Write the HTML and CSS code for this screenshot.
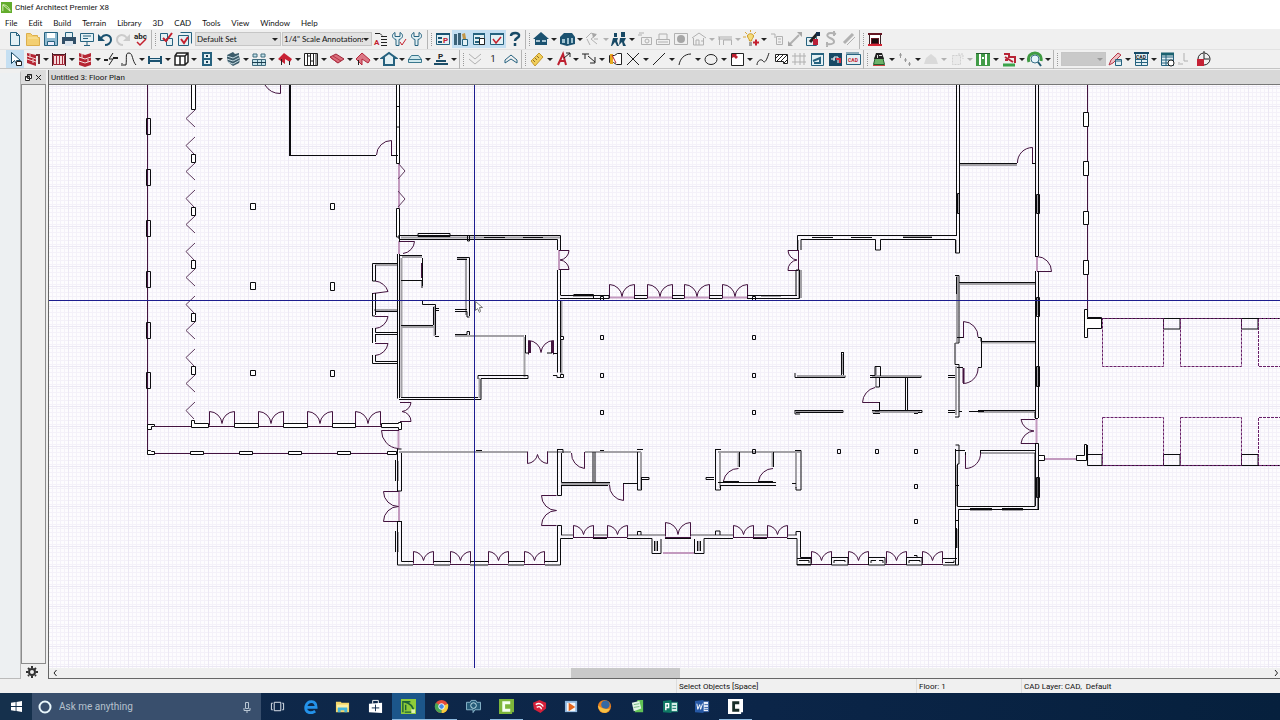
FILE: index.html
```html
<!DOCTYPE html>
<html lang="en">
<head>
<meta charset="utf-8">
<title>Chief Architect Premier X8</title>
<link rel="stylesheet" href="styles.css">
</head>
<body>
<header class="titlebar">
<svg class="logo" viewBox="0 0 12 12"><path fill="#62ac2c" d="M0 0h12v12H0z"/><path fill="none" stroke="#e4f5c8" d="M2 10V3c4 0 7 3 8 7M2 3l8 7"/></svg>
<span>Chief Architect Premier X8</span>
</header>
<nav class="menu">
<button>File</button><button>Edit</button><button>Build</button><button>Terrain</button><button>Library</button><button>3D</button><button>CAD</button><button>Tools</button><button>View</button><button>Window</button><button>Help</button>
</nav>

<div class="toolbar" role="toolbar" aria-label="Standard">
<button class="t" aria-label="New"><svg viewBox="0 0 18 18"><path class="n" fill="#fff" d="M4.500 2.500h6l3 3v10h-9zM10.500 2.500v3h3"/></svg></button>
<button class="t" aria-label="Open"><svg viewBox="0 0 18 18"><path fill="#f3cf72" stroke="#dcae4c" d="M2.500 15.500v-12h4l2 2h5v2h2v8z"/><path stroke="#fbe7a8" d="M4 8h10"/></svg></button>
<button class="t" aria-label="Save"><svg viewBox="0 0 18 18"><path fill="#8fb9d0" stroke="#26627f" d="M2.500 2.500h13v13h-13z"/><path fill="#fff" d="M5 3h8v5H5z"/><path fill="#eef" stroke="#26627f" d="M5.500 11.500h7v4h-7z"/></svg></button>
<button class="t" aria-label="Print"><svg viewBox="0 0 18 18"><path class="n" fill="#fff" d="M5.500 7V2.500h7V7"/><path fill="#314f68" d="M2 7h14v7H2z"/><path fill="#dce5ee" d="M5 11h8v5H5z"/></svg></button>
<button class="t" aria-label="Send to layout"><svg viewBox="0 0 18 18"><path class="n" fill="#cfe6e9" d="M2.500 3.500h13v8h-13zM5 6h8M5 8.500h5M9 12v3M6 15.500h6"/></svg></button>
<button class="t" aria-label="Undo"><svg viewBox="0 0 18 18"><path fill="none" stroke="#1b5270" stroke-width="2" d="M5 8c4-5 10-3 10 2 0 3-3 5-6 5"/><path fill="#1b5270" d="M2 4v7h7z"/></svg></button>
<button class="t" aria-label="Redo" disabled><svg viewBox="0 0 18 18"><path fill="none" stroke="#cbcbcb" stroke-width="2" d="M13 8C9 3 3 5 3 10c0 3 3 5 6 5"/><path fill="#cbcbcb" d="M16 4v7H9z"/></svg></button>
<button class="t" aria-label="Spelling"><svg viewBox="0 0 18 18"><text x="2" y="9" class="ic">abc</text><path fill="none" stroke="#c4202e" stroke-width="1.500" d="M5 12l3 3 6-6"/></svg></button>
<i class="sep"></i>
<button class="t" aria-label="Display options"><svg viewBox="0 0 18 18"><path class="n" fill="#d9eef0" d="M2.500 3.500h7v7h-7zM8.500 8.500h6v7h-6z"/><path fill="none" stroke="#c4202e" stroke-width="2" d="M5 8l3 3 6-8"/></svg></button>
<button class="t" aria-label="Layer sets"><svg viewBox="0 0 18 18"><path class="n" fill="#d9eef0" d="M4.500 2.500h11v11M2.500 5.500h10v10h-10z"/><path fill="none" stroke="#c4202e" stroke-width="2" d="M5 9l3 4 4-6"/></svg></button>
<label class="combo set"><select aria-label="Layer set"><option>Default Set</option></select></label>
<label class="combo ann"><select aria-label="Annotation set"><option>1/4" Scale Annotations</option></select></label>
<button class="t" aria-label="Text style"><svg viewBox="0 0 18 18"><path class="k" d="M3 3.500h5l2 2M9 6.500h6M9 9.500h6M9 12.500h6M9 15.500h6"/><text x="2" y="15" class="ic r">A</text></svg></button>
<button class="t" aria-label="Preferences"><svg viewBox="0 0 18 18"><path class="n" fill="#e6f0f2" d="M5 2.500c-4 2-3 6 1 7v6h3v-6c4-1 5-5 1-7v4H5z"/><path fill="none" stroke="#c4202e" d="M10 12l2 3 4-6"/></svg></button>
<button class="t" aria-label="Defaults"><svg viewBox="0 0 18 18"><path class="n" fill="#e6f0f2" d="M6 2.500c-4 2-3 6 1 7v6h3v-6c4-1 5-5 1-7v4H6z"/></svg></button>
<i class="sep"></i>
<button class="t" aria-label="Project browser"><svg viewBox="0 0 18 18"><path class="n" fill="#dceff3" d="M2.500 3.500h13v11h-13z"/><path fill="#1b5270" d="M2 3h14v2H2zM4 7h4v2H4zM4 11h4v2H4z"/><text x="9" y="13" class="ic r">P</text></svg></button>
<button class="t on" aria-label="Library browser"><svg viewBox="0 0 18 18"><path fill="#3d6379" d="M2 4h3v11H2zM6 3h3v12H6z"/><path fill="#c29648" d="M10 4l3-1 2 11-3 1z"/><path class="n" fill="#fff" d="M10.500 9.500h5v6h-5z"/></svg></button>
<button class="t on" aria-label="Active view"><svg viewBox="0 0 18 18"><path class="n" fill="#eef7fa" d="M3.500 3.500h11v11h-11z"/><path class="n" stroke-width="2" d="M3 4h12M5 8h5M5 12h4"/><path class="k" fill="#fff" d="M9.500 8.500h5v6h-5z"/></svg></button>
<button class="t on" aria-label="Layer display"><svg viewBox="0 0 18 18"><path class="n" fill="#e7f3f3" d="M2.500 4.500h13v10h-13z"/><path class="n" stroke-width="2" d="M2 4h14"/><path fill="none" stroke="#c4202e" stroke-width="1.500" d="M5 9l3 4 5-6"/></svg></button>
<button class="t" aria-label="Help"><svg viewBox="0 0 18 18"><path fill="none" stroke="#174965" stroke-width="2.500" d="M5 6c0-4 9-4 8 0 0 2-4 2-4 5M9 13v3"/></svg></button>
<i class="sep"></i>
<button class="t d" aria-label="Full camera"><svg viewBox="0 0 18 18"><path fill="#1b5270" d="M9 2l8 7h-2v6H3V9H1z"/><path fill="#aac5d2" d="M4 10h4v2H4zM10 10h4v2h-4z"/></svg></button>
<button class="t d" aria-label="Perspective overview"><svg viewBox="0 0 18 18"><path fill="#1b5270" d="M2 7l4-4h8l3 4v7l-8 2-7-2z"/><path fill="#9ec1cf" d="M4 9h3v4H4zM9 8h2v6H9zM13 8h2v5h-2z"/></svg></button>
<button class="t d f" aria-label="Camera tools"><svg viewBox="0 0 18 18"><path class="k" d="M2 8l5-5 5 2-5 4 6 5M3 9l3 6M10 9h4"/><path d="M8 3l5 1-4 4z"/></svg></button>
<button class="t d" aria-label="Walkthrough"><svg viewBox="0 0 18 18"><path fill="#174965" d="M4 3h3v4H4zM11 2h4v5h-4zM3 8h5l-1 3 2 5H7l-2-4-3 4H1zM10 8h6l-2 4 2 4h-3l-1-4-3 3z"/></svg></button>
<button class="t f" aria-label="Render"><svg viewBox="0 0 18 18"><path class="k" d="M3 3h5M2 5h4M5.500 7.500h10v7h-10z"/><circle class="k" cx="11" cy="11" r="2"/></svg></button>
<button class="t f" aria-label="Spray"><svg viewBox="0 0 18 18"><path class="k" d="M2.500 9.500h13v5h-13zM5 9V4h8v5M4 12h10"/></svg></button>
<button class="t f" aria-label="Record"><svg viewBox="0 0 18 18"><path class="k" d="M2.500 3.500h13v11h-13z"/><circle cx="9" cy="9" r="4"/></svg></button>
<button class="t d f" aria-label="Elevation"><svg viewBox="0 0 18 18"><path class="k" d="M2 8l7-5 7 5M3.500 8v7h10V8M6 15v-5h3v5M11 11h3"/></svg></button>
<button class="t d f" aria-label="Framing"><svg viewBox="0 0 18 18"><path class="k" d="M2 7h14M3.500 7v8M7.500 15v-5h8v5M2 9h14"/></svg></button>
<button class="t d" aria-label="Lights"><svg viewBox="0 0 18 18"><path fill="#f6dc7c" stroke="#c9971f" d="M5.500 6c0-3 6-3 6 0 0 2-2 3-2 5h-2c0-2-2-3-2-5z"/><path stroke="#555" d="M7 13h3M7 15h3"/><path fill="none" stroke="#d9a63a" d="M1 7h3M3 2l2 2M8.500 0v2M14 2l-2 2"/><path fill="none" stroke="#c4202e" stroke-width="2" d="M11 12.500h6M14 9.500v6"/></svg></button>
<button class="t f" aria-label="Adjust sunlight"><svg viewBox="0 0 18 18"><path class="k" d="M3 4h4v4M8.500 6.500h6v8h-6zM10 9h3M10 12h3"/></svg></button>
<button class="t f" aria-label="Transfer"><svg viewBox="0 0 18 18"><path class="k" stroke-width="2" d="M4 14L13 5"/><path d="M11 2h5v5zM2 11v5h5z"/></svg></button>
<button class="t" aria-label="Material painter"><svg viewBox="0 0 18 18"><path class="n" fill="#cfd9e5" d="M2.500 7.500h10v8h-10z"/><path class="k" stroke-width="3" d="M6 12l7-8"/><path fill="#bb2039" d="M9 9h5v6H9z"/><path fill="#142c48" d="M12 2h4v4h-4z"/></svg></button>
<button class="t f" aria-label="Swap"><svg viewBox="0 0 18 18"><path class="k" stroke-width="2" d="M14 4C5 1 3 6 8 8s7 7-4 6M12 1v5M5 12v5"/></svg></button>
<button class="t f" aria-label="Eyedropper"><svg viewBox="0 0 18 18"><path class="k" stroke-width="3" d="M4 13l9-9"/><path class="k" d="M7 15l8-8"/></svg></button>
<i class="sep"></i>
<button class="t" aria-label="Fireplace"><svg viewBox="0 0 18 18"><path fill="#fff" stroke="#3c2428" d="M3.500 4v11h11V4"/><path fill="#651522" d="M2 3h14v2H2zM5 8h8v6H5z"/><path fill="#d52535" d="M2 14h14v2H2z"/><path fill="#190b0d" d="M6 9h6v4H6z"/></svg></button>
</div>

<div class="toolbar second" role="toolbar" aria-label="Build tools">
<button class="t on" aria-label="Select objects"><svg viewBox="0 0 18 18"><path fill="#fff" stroke="#174965" d="M5.500 2.500v11l3-3 3 5 2-1-3-4h4z"/><path class="k" fill="#fff" d="M10.500 11.500h5v4h-5z"/></svg></button>
<button class="t d" aria-label="Walls"><svg viewBox="0 0 18 18"><path fill="#b62634" d="M3 3l9 2v11l-9-3z"/><path stroke="#efd3d3" fill="none" d="M3 6l9 3M3 9l9 3M6 4v4M9 9v4"/><path stroke="#753038" stroke-width="2" fill="none" d="M12 5h3v9"/></svg></button>
<button class="t d" aria-label="Railings"><svg viewBox="0 0 18 18"><path fill="#f6d8da" stroke="#a12635" d="M3.500 5.500h11v9h-11zM6.500 6v8M9.500 6v8M12.500 6v8"/><path stroke="#531923" fill="none" d="M2 4.500h14M2.500 3v13M15.500 3v13"/></svg></button>
<button class="t d" aria-label="Foundation"><svg viewBox="0 0 18 18"><path fill="#b62634" d="M3 3l6 2 6-2v12l-6 2-6-2z"/><path stroke="#f4dfdf" fill="none" d="M3 7l6 2 6-2M3 11l6 2 6-2M6 4v4M12 9v3"/></svg></button>
<button class="t" aria-label="Break line"><svg viewBox="0 0 18 18"><path class="k" stroke-width="2" d="M2 10h4M11 8h5"/><path class="k" d="M11 3L7 9h4l-4 6"/></svg></button>
<button class="t d" aria-label="Spline wall"><svg viewBox="0 0 18 18"><path class="k" d="M3 15h3C7 7 5 3 9 3s3 8 7 12M2 13v3"/></svg></button>
<button class="t d" aria-label="Doors"><svg viewBox="0 0 18 18"><path fill="#1b5270" d="M2 6h2v8H2zM14 6h2v8h-2zM4 8h10v4H4z"/><path fill="#d2e5ee" d="M4 9h10v1H4z"/></svg></button>
<button class="t d" aria-label="Cabinets"><svg viewBox="0 0 18 18"><path fill="#fff" stroke="#222" stroke-width="1.500" d="M3 6l2-3h11v9l-3 3H3zM3 6h10v9M13 6l3-3M8 6v9"/></svg></button>
<button class="t d" aria-label="Wall cabinet"><svg viewBox="0 0 18 18"><path class="n" stroke-width="2" fill="#e7eff3" d="M5 3h8v12H5zM5 9h8"/><path stroke="#1b3f55" stroke-width="2" d="M8 6h2M8 12h2"/></svg></button>
<button class="t d" aria-label="Stairs"><svg viewBox="0 0 18 18"><path fill="#3c5c6b" d="M3 5l6-3 2 2 4-1v3l1 4-1 3-6 3-5-4-1-3z"/><path stroke="#c3d8e0" fill="none" d="M3 6l6 2 6-3M3 9l6 2 6-3M4 12l5 2 7-4"/></svg></button>
<button class="t d" aria-label="Windows"><svg viewBox="0 0 18 18"><path fill="#c5e2ea" stroke="#3e6a7d" d="M2.500 9.500h13v6h-13zM7.500 9v6M11.500 9v6M3 4h4v3H3zM11 4h4v3h-4z"/><path stroke="#193e50" d="M2 12.500h14"/></svg></button>
<button class="t d" aria-label="Roof"><svg viewBox="0 0 18 18"><path fill="#c82234" d="M2 9l6-6 8 6-2 3-5-3v5z"/><path class="k" d="M5.500 9v6M13.500 11v4"/></svg></button>
<button class="t d" aria-label="Framing"><svg viewBox="0 0 18 18"><path class="k" fill="#fff" d="M2.500 3.500h13v12h-13zM5.500 3v12M8.500 3v12M11.500 3v12M14 3v12M6 6h2M9 11h2"/></svg></button>
<button class="t d" aria-label="Floor"><svg viewBox="0 0 18 18"><path fill="#da6d7b" stroke="#9f2638" d="M2 7l6-3 8 5-6 4z"/><path stroke="#b53446" fill="none" d="M5 6l8 5M3 8l7 5"/></svg></button>
<button class="t d" aria-label="Gable"><svg viewBox="0 0 18 18"><path fill="#db7785" stroke="#b4273a" d="M2 9l6-6 8 7-2 3-6-4v6z"/><path class="k" d="M4.500 10v5"/></svg></button>
<button class="t d" aria-label="Room"><svg viewBox="0 0 18 18"><path class="n" fill="#f4fafc" stroke-width="2" d="M2 8l7-5 7 5h-2v7H4V8z"/></svg></button>
<button class="t d" aria-label="Terrain"><svg viewBox="0 0 18 18"><path fill="#cfe8ed" stroke="#39778d" d="M2.500 12.500h13v-3l-3-4h-7l-3 4zM2 9.500h14"/></svg></button>
<button class="t d" aria-label="Plan"><svg viewBox="0 0 18 18"><text x="6" y="9" class="ic">P</text><path stroke="#1b4d68" stroke-width="2" d="M2 14h14M4 11h10"/></svg></button>
<i class="sep"></i>
<button class="t f" aria-label="Down one floor"><svg viewBox="0 0 18 18"><path class="k" d="M3 4l6 5 6-5M3 9l6 5 6-5"/></svg></button>
<button class="t floor" aria-label="Floor">1</button>
<button class="t" aria-label="Up one floor"><svg viewBox="0 0 18 18"><path class="n" d="M3 10l6-5 6 5v3l-6-4-6 4z"/></svg></button>
<i class="sep"></i>
<button class="t d" aria-label="Dimensions"><svg viewBox="0 0 18 18"><path fill="#f1ce59" stroke="#c59a31" d="M3 11l8-8 4 4-8 9z"/><path stroke="#8b6d2c" d="M7 8l2 2M9 6l2 2M5 10l2 2"/></svg></button>
<button class="t d" aria-label="Text"><svg viewBox="0 0 18 18"><path fill="none" stroke="#bd2030" stroke-width="2" d="M4 15L9 4l3 11M5 11h6"/><path class="k" d="M10 8l6-5M12 3h4v4"/></svg></button>
<button class="t d" aria-label="Leader"><svg viewBox="0 0 18 18"><path class="k" d="M2 4h7M5 4v5M8 6l7 6M15 7v6h-5"/></svg></button>
<button class="t" aria-label="Callout"><svg viewBox="0 0 18 18"><path class="k" fill="#fff" d="M3.500 5.500h5l3-2h4v11h-5l-3-2h-4z"/><path fill="#e6aa20" d="M4 4h3v10H4z"/><path fill="none" stroke="#bd2030" d="M6 5l4 8"/></svg></button>
<button class="t d" aria-label="Point"><svg viewBox="0 0 18 18"><path class="k" d="M3 3l12 12M15 3L3 15"/></svg></button>
<button class="t d" aria-label="Line"><svg viewBox="0 0 18 18"><path class="k" d="M3 15L15 3"/></svg></button>
<button class="t d" aria-label="Arc"><svg viewBox="0 0 18 18"><path class="k" d="M3 15C4 9 8 4 15 4"/></svg></button>
<button class="t d" aria-label="Circle"><svg viewBox="0 0 18 18"><ellipse class="k" cx="9" cy="9.500" rx="6" ry="5"/></svg></button>
<button class="t d" aria-label="Box"><svg viewBox="0 0 18 18"><path class="k" fill="#fff" d="M3.500 3.500h12v12h-12z"/><path fill="#bd2030" d="M4 4h5l-1 1 2 2-2 2-2-2-2 1z"/></svg></button>
<button class="t" aria-label="Spline"><svg viewBox="0 0 18 18"><path class="k" d="M3 15c0-4 4-7 6-4s4-2 6-8"/></svg></button>
<button class="t" aria-label="Hatch"><svg viewBox="0 0 18 18"><path class="k" fill="#fff" d="M3.500 4.500h12v9h-4v-2h-8zM4 8l4-4M4 12l8-8M8 12l7-7M12 13l4-4"/></svg></button>
<button class="t f" aria-label="Grid"><svg viewBox="0 0 18 18"><path class="k" d="M2 6h14M2 12h14M5 3v12M10 3v12M14 3v12"/></svg></button>
<button class="t" aria-label="CAD detail"><svg viewBox="0 0 18 18"><path class="n" fill="#dceff3" d="M3.500 3.500h12v12h-12z"/><path class="n" stroke-width="2" d="M3 4h13M5 11l7-3v6M6 13h7"/></svg></button>
<button class="t" aria-label="CAD block"><svg viewBox="0 0 18 18"><path fill="#174965" d="M3 3h13v13H3z"/><path fill="none" stroke="#fff" d="M5 9h4M8 11V7h4v6"/><path stroke="#d42c3c" stroke-width="2" fill="none" d="M10 9h4v4"/></svg></button>
<button class="t" aria-label="CAD from view"><svg viewBox="0 0 18 18"><path class="n" fill="#fff" d="M2.500 4.500h14v10h-14zM2 3h13"/><text x="4" y="12" class="ic r s">CAD</text></svg></button>
<i class="sep"></i>
<button class="t d" aria-label="Lock"><svg viewBox="0 0 18 18"><path fill="#6cb36a" stroke="#235f2d" d="M3.500 14.500l2-8h7l2 8z"/><path fill="#222" d="M6 3h6l2 6H4z"/><path stroke="#c44" d="M3 15.500h12"/><path fill="#ddd" d="M7 5h1v3H7zM9 5h3v1H9z"/></svg></button>
<button class="t d" aria-label="Elevation point"><svg viewBox="0 0 18 18"><path stroke="#999" fill="none" d="M3 5h3M4.500 3v5M8 10h3M9.500 8v4M12 14h3M13.500 12v4"/></svg></button>
<button class="t d f" aria-label="Hill"><svg viewBox="0 0 18 18"><path fill="#aaa" d="M2 14l2-6 5-4 5 4 2 6z"/></svg></button>
<button class="t d f" aria-label="Terrain feature"><svg viewBox="0 0 18 18"><path fill="#ddd" stroke="#888" stroke-dasharray="2 1" d="M4.500 5.500h8v9h-8zM10 4h5v5"/></svg></button>
<button class="t d" aria-label="Road"><svg viewBox="0 0 18 18"><path fill="#419b47" d="M2 3h14v13H2z"/><path fill="#fff" d="M5 4h2v11H5zM11 4h2v11h-2zM8 7h2v2H8z"/><path fill="#235f2d" d="M2 3h14v1H2z"/></svg></button>
<button class="t d" aria-label="Sprinkler"><svg viewBox="0 0 18 18"><path stroke="#3ba34b" stroke-width="3" d="M3 15h12"/><path stroke="#b82436" stroke-width="2" fill="none" d="M4 4h5v3h6v6M5 7l8 5M5 10h3"/></svg></button>
<button class="t d" aria-label="Plant chooser"><svg viewBox="0 0 18 18"><path fill="none" stroke="#409b43" stroke-width="3" d="M3 12C1 6 5 3 9 3s7 3 6 8"/><circle cx="9" cy="9" r="4" fill="#e8f5fb" stroke="#3a7187"/><path stroke="#225a70" stroke-width="2" d="M12 12l3 4"/></svg></button>
<i class="sep"></i>
<label class="combo off"><select aria-label="Current layer" disabled><option></option></select></label>
<button class="t d" aria-label="Revision"><svg viewBox="0 0 18 18"><path fill="#eec0c4" stroke="#b7384a" d="M3 15l2-5 7-7 3 2-8 8z"/><path class="n" fill="#d9e8f6" d="M9.500 9.500h6v6h-6zM9 11h6"/></svg></button>
<button class="t d" aria-label="CAD details"><svg viewBox="0 0 18 18"><path class="n" fill="#dceaf4" d="M3.500 3.500h12v12h-12zM3 9.500h12M3 12.500h12M9.500 10v5"/><path stroke="#174965" stroke-width="2" d="M2 3h15"/><text x="4" y="9" class="ic s">CAD</text></svg></button>
<button class="t" aria-label="Schedules"><svg viewBox="0 0 18 18"><path class="n" fill="#e2f0f2" d="M3.500 3.500h12v12h-12zM3 7h12M3 10h12M3 13h12M8 3v12"/><path stroke="#1b6170" stroke-width="3" d="M3 4h13"/><circle class="k" fill="#fff" cx="13" cy="13" r="3"/></svg></button>
<button class="t f" aria-label="North arrow"><svg viewBox="0 0 18 18"><path class="k" d="M4 14h3M8 3v8h4M3 15v-3"/></svg></button>
<button class="t" aria-label="Time tracker"><svg viewBox="0 0 18 18"><circle class="k" fill="#f3dede" cx="10" cy="9" r="6"/><path class="k" d="M10 4v5h5M10 1v2"/><path fill="#c52135" d="M3 9h7v7H3z"/></svg></button>
</div>

<main class="work">
<aside class="strip"></aside>
<aside class="dock">
<div class="dockhead"><button aria-label="Float"><svg viewBox="0 0 7 7"><path class="k" fill="#fff" d="M2.500.5h4v4h-4zM.5 2.500h4v4h-4zM2 1h5M0 3h5"/></svg></button><button aria-label="Close"><svg viewBox="0 0 7 7"><path class="k" d="M1 1l5 5M6 1L1 6"/></svg></button></div>
<div class="dockbody"></div>
<button class="gear" aria-label="Settings"><svg viewBox="0 0 12 12"><circle cx="6" cy="6" r="3" fill="none" stroke="#333" stroke-width="2"/><path stroke="#333" stroke-width="2" stroke-dasharray="2 8" d="M6 0v12M0 6h12M2 2l8 8M10 2l-8 8"/></svg></button>
</aside>
<section class="doc">
<h1 class="doctitle">Untitled 3: Floor Plan</h1>
<svg class="plan" viewBox="49 85 1231 583" preserveAspectRatio="xMinYMin slice" role="img" aria-label="Floor plan drawing">
<defs>
<pattern id="fine" width="4" height="4" patternUnits="userSpaceOnUse"><path class="fine" d="M0 .5h4M.5 0v4"/></pattern>
<pattern id="major" width="20" height="20" patternUnits="userSpaceOnUse"><path class="major" d="M0 6.500h20M8.500 0v20"/></pattern>
<path id="dd" d="M0 14V0A13 13 0 0 1 12.500 12A13 13 0 0 1 25 0V14"/>
<path id="ds" d="M0 12V0A11 11 0 0 1 10 9A11 11 0 0 1 20 0V12"/>
<path id="side" d="M0 0H-15A15 15 0 0 0 0 15A15 15 0 0 0 -15 30H0"/>
<path id="fold" d="M9 0L0 8.500L9 17M9 27L0 35.500L8 44"/>
<path id="post" d="M0 0h3v4h-3z"/>
<path id="jamb" d="M0 0h4v16h-4z"/>
</defs>
<path fill="#fdfcfe" d="M49 85H1280V668H49z"/>
<path fill="url(#fine)" d="M49 85H1280V668H49z"/>
<path fill="url(#major)" d="M49 85H1280V668H49z"/>

<g class="g">
<path d="M401 237.500H560M401.500 258V397M402 257H422M466 258V315M457 259H466M455 336H524M524.500 337V377M479.500 378V398M401 327H434M434.500 306V336M561.500 300V375M375 265H397M374 310H397M399 452H527M547 452H571M585 452H641M641 452V489M561 484H610M561 535H573M593 535H607M627 535H665M691 535H733M753 535H767M787 535H797M718 452H800M720 452V488M796 452V488M738.500 452V467M772.500 452V467M798 240V250M799 270V298M801 270V298M956 240V253M957 276V342M956 366V415M960 284H1036M982 342.500H1036M978 412H1036M797 376H844M843 354V374M796 412H842M872 376H920M876 367V387M872 412H920M1038 298V315M1038 367V386M1038 478V497M958 529V548M957 465V506M980 453H1036M970 510H992M1002 510H1023M573 296H593M761 296H781M903 236H932M398 461V481M398 532V552M656 541V551M699 541V551M1038 195V213M958 194V213M960 165H1017"/>
</g>
<g class="p">
<path d="M399 163V208M399 241V254M398.500 430V449M399 491V521M663 553H694M1045 459H1076M559 250V270M1037 256V271M1036.500 419V443M609 297.500H634M647 297.500H672M684 297.500H709M722 297.500H747"/>
</g>
<g class="fold">
<use href="#fold" x="186" y="110"/><use href="#fold" x="186" y="163"/><use href="#fold" x="186" y="216"/><use href="#fold" x="186" y="269"/><use href="#fold" x="186" y="322"/><use href="#fold" x="186" y="375"/>
<path d="M398 163l7 8-7 8M398 191l7 8-7 8"/>
</g>
<g class="m">
<path d="M147.500 85V453M1087.500 85V330M798.500 250V270M155 426.500H191M209 426.500H399M155 453.500H387M413 564.500H434M450 564.500H470M488 564.500H508M524 564.500H545M811 564.500H831M848 564.500H868M885 564.500H906M922 564.500H943M573 537.500H627M733 537.500H787M665 537.500H691"/>
<use href="#dd" x="209.500" y="411.500"/><use href="#dd" x="258.500" y="411.500"/><use href="#dd" x="307.500" y="411.500"/><use href="#dd" x="355.500" y="411.500"/>
<use href="#dd" x="609.500" y="284.500"/><use href="#dd" x="647.500" y="284.500"/><use href="#dd" x="684.500" y="284.500"/><use href="#dd" x="722.500" y="284.500"/>
<use href="#dd" x="665.500" y="522.500"/><use href="#dd" x="528.500" y="340.500"/>
<path class="thick" d="M530 341V353M552 341V353M422 263V278M963.500 368V383"/>
<use href="#ds" x="413.500" y="551.500"/><use href="#ds" x="450.500" y="551.500"/><use href="#ds" x="488.500" y="551.500"/><use href="#ds" x="524.500" y="551.500"/>
<use href="#ds" x="811.500" y="551.500"/><use href="#ds" x="848.500" y="551.500"/><use href="#ds" x="886.500" y="551.500"/><use href="#ds" x="922.500" y="551.500"/>
<use href="#ds" x="573.500" y="525.500"/><use href="#ds" x="607.500" y="525.500"/><use href="#ds" x="733.500" y="525.500"/><use href="#ds" x="767.500" y="525.500"/>
<use href="#ds" transform="translate(527.500 463.500) scale(1 -1)"/>
<use href="#side" x="398.500" y="491.500"/><use href="#side" x="556.500" y="495.500"/>
<path d="M1035 419.500H1021A14 14 0 0 0 1034 431A14 14 0 0 0 1021 443.500H1035M559 250.500H569A10 10 0 0 1 560 260A10 10 0 0 1 569 269.500H559M798 250.500H788A10 10 0 0 0 797 260A10 10 0 0 0 788 270.500H798M400 402.500H411A10 10 0 0 1 402 411.500A10 10 0 0 1 411 421.500H400"/>
<path d="M265 85A18 18 0 0 0 280.500 93.500V85M376.500 155A15 15 0 0 1 391.500 140.500V155M399 241.500H414.500A13 13 0 0 1 403 253.500M399 430.500H381.500A18 18 0 0 0 398 448.500M375 281A15 15 0 0 1 388 291.500L373 293.500M375 316.500H388A14 14 0 0 1 375 328.500M375 343.500H388A14 14 0 0 1 375 355.500M571.500 453A15 15 0 0 0 584.500 468.500V452M609.500 485A15 15 0 0 0 623.500 500.500V484M723.500 481A15 15 0 0 1 738.500 468.500M758.500 481A15 15 0 0 1 773 468.500M879 402.500H862.500A16 16 0 0 1 875 387.500M963.500 338V321.500A15 15 0 0 1 978 337M963 383.500A15 15 0 0 0 978 368M965.500 452V468.500A15 15 0 0 0 980.500 452M1037 271.500H1051.500A15 15 0 0 0 1037 256.500M1017.500 163A15 15 0 0 1 1032.500 147.500V163"/>
</g>

<g class="w">
<path fill="#fff" d="M191.500 85V109.500H195.500V85M396.500 85V163.500H399.500V85M396.500 208.500H399.500V237H396.500zM191.500 154.500h4v8h-4zM191.500 207.500h4v8h-4zM191.500 260.500h4v8h-4zM191.500 313.500h4v8h-4zM191.500 366.500h4v8h-4z"/>
<use href="#jamb" x="146.500" y="118.500"/><use href="#jamb" x="146.500" y="169.500"/><use href="#jamb" x="146.500" y="220.500"/><use href="#jamb" x="146.500" y="271.500"/><use href="#jamb" x="146.500" y="322.500"/><use href="#jamb" x="146.500" y="372.500"/>
<path fill="#fff" d="M250.500 203.500h5v6h-5zM330.500 203.500h4v6h-4zM250.500 282.500h5v7h-5zM330.500 282.500h4v8h-4zM250.500 370.500h5v5h-5zM330.500 370.500h4v6h-4z"/>
<path class="thick" d="M290 85V155.500"/>
<path d="M289 155.500H376M391 155.500H398M397 106.500H400M397 127H400"/>
<path fill="#fff" d="M147.500 424.500h7v2h-3v3h-4zM147.500 454.500v-4h3l1 1h3v3zM191.500 420.500h3v3h14v4h-17zM234.500 423.500h24v4h-24zM283.500 423.500h24v4h-24zM332.500 423.500h23v4h-23zM381.500 423.500h17v-1h3v7h-3v-2h-17zM190.500 451.500h13v3h-13zM239.500 451.500h13v3h-13zM288.500 451.500h13v3h-13zM337.500 451.500h13v3h-13zM387.500 451.500h9v3h-9z"/>
<path d="M397 263.500H372.500V281H375M375.500 265V281M372.500 293V316H375M375.500 293V315M375 311.500H397M372.500 328V343M375.500 328V332.500H397M375 334.500H397M375.500 334V342M372.500 355V363.500H397M375.500 355V361.500H397"/>
<path d="M397.500 254V398.500M399.500 237V242M399.500 254V398M399 255.500H422M401 280.500H422V288M422.500 258V286M401 325.500H433M422.500 300V304.500H435.500V335M433.500 307V325M435 310.500H439M435 308.500H439M435 336.500H439M401 397.500H478M399 399.500H481V379M478 379V375.500H528M481 378.500H528V375.500M525.500 335V353H529M553 353.500H557M457 257.500H469.500V316M457 259.500H467M455 309.500H467M455 311.500H467V317H469.500M455 334.500H467V331.500H469.500V335M467.500 235V241H469.500V235"/>
<path d="M399 239.500H557.500V250M399 235.500H560.500V250M399 235V239M418 233.500H450V236.500H418zM484 237.500H505M523 237.500H543M557.500 270V372.500M560.500 270V295M560.500 300V372.500M547 353H552M553 375.500H557V377.500H561.500"/>
<path fill="#fff" d="M560.500 336.500h3v3h-3zM560.500 374.500h3v3h-3z"/>
<path d="M560.500 295.500H609V298M560 298.500H609M573.500 294.500H593.500V298M634.500 295.500H647M634 298.500H647M672 295.500H684M672 298.500H684M709 295.500H722M709 298.500H722M747 295.500H797M747 298.500H799.500V270H796V295"/>
<path d="M797.500 250V235.500H957M801 250V239.500H875.500V250H880.500V239.500H955.500V253H959.500V84M956.500 84V235M812 237.500H833M851 237.500H872M903 237.500H932"/>
<path d="M1035.500 85V256M1038.500 85V256M1035 256.500H1038M1035.500 271V418M1038.500 271V418M960 163.500H1017M1032 163.500H1036M957.500 193.500h2v20h-2zM1036.500 194.500h3v19h-3zM1036.500 297.500h3v19h-3zM1036.500 366.500h3v20h-3zM1036.500 477.500h3v20h-3zM955 275.500H959V343H955.500M956.500 277V294M959 282.500H1036M957 337.500H963M978 337.500H981V341.500H1036M955 343V364.500H959V417H955M957 367.500H963M978 367.500H981.500V338M959 411.500H962M948 410.500H955M948 412.500H955M948 375.500H955M948 377.500H955M969 411.500H984M978 410.500H1036M1035 418.500H1038M1035 412V418"/>
<path d="M795 373V377.500H845V375.500M841.500 352V375M843.500 352V375M841 352.500H844M795 410.500H843V412.500H796M795 410V414H800M870 377.500H921V375.500M870 375.500H875V366.500H880.500V376M879.500 378V387H875.500M905.500 378V411M907.500 378V411M879.500 402V411H875M872 410.500H922V412.500H918M873 413.500H880M914 413.500H918"/>
<path d="M397.500 449V491H401.500V453M401.500 449H397.500M395.500 460V481M401.500 521V561.500H413M397.500 521V565H413M395.500 531V552M397 521.500H401M434 561.500H450M434 565H450M470 561.500H488M470 565H488M508 561.500H524M508 565H524M545 561.500H557.500V525.500H561.500V535M545 565H560.500V538.500H573M557.500 449V495.500H561.500V485M557 449.500H563V453M561.500 453V482.500H610M561 485.500H608M593 452V482M595 452V482M623 483.500H637M637.500 452V490H641.500V478M637 449.500H643M641 477.500H649V479.500H641M476 450.500H482M600 450.500H604M593 538.500H607M627 538.500H652V553.500H661V539M654.500 541V551M657.500 541V551M665 538.500H691M694.500 539V553.500H704V538.500H733M697.500 541V551M700.500 541V551M637.500 535V531.500H641V535M753 538.500H767M787 538.500H797V565H811M715.500 535V531H720V535M796 535V531.500H800.500V557.500H811"/>
<path d="M715.500 449V490H720.500V486M718 482.500H776M720 485.500H776M715 449.500H721M723 481.500H739M758 481.500H773M739.500 467V452M773.500 467V452M795 450.500H801V490H796V487M792 483.500H796M714 479.500H706V477.500H714"/>
<path d="M797 558.500H811V564.500H797M799 560.500H809V563M831.500 557.500H848V565H831.500zM834 563V560.500H845V562M868.500 557.500H885V565H868.500zM871 563V560.500H876M879 560.500H883V563M906.500 557.500H922V565H906.500zM909 563V560.500H920V562M943 565H958.500V509.500H1038V478M943 558.500H957M945 562.500H954V560.500M955.500 449V565M955.500 445H959V464H957.500V506.500H1035V453M955 450.500H965M965.500 452V455M980 450.500H1036M980.500 450V453M1035.500 443.500H1038.500V510M1035.500 443V506M970 508.500H992M1002 508.500H1023M956.500 528V548M914 555.500H917V557M955 485.500H959M955 520.500H959"/>
<path fill="#fff" d="M1038.500 455.500h6v5h-6zM1076.500 455.500h8v-11h2v16h-10z"/>
<use href="#post" x="600.500" y="335.500"/><use href="#post" x="600.500" y="373.500"/><use href="#post" x="600.500" y="410.500"/><use href="#post" x="752.500" y="335.500"/><use href="#post" x="752.500" y="373.500"/><use href="#post" x="752.500" y="410.500"/><use href="#post" x="600.500" y="296.500"/><use href="#post" x="752.500" y="296.500"/><use href="#post" x="752.500" y="449.500"/>
<use href="#post" x="837.500" y="449.500"/><use href="#post" x="875.500" y="449.500"/><use href="#post" x="914.500" y="449.500"/><use href="#post" x="914.500" y="484.500"/><use href="#post" x="914.500" y="519.500"/>
<path fill="#fff" d="M1083.500 112.500h5v14h-5zM1083.500 161.500h5v14h-5zM1083.500 211.500h5v13h-5zM1083.500 260.500h5v14h-5zM1084.500 309.500h3v8h14v11h-14v9h-3z"/>
<path d="M1087 318.500H1280M1087.500 445V465.500H1280M1087 454.500H1102V465M1163.500 318V329H1180V318M1241.500 318V329H1258V318M1163.500 465V454.500H1180V465M1241.500 465V454.500H1258V465"/>
</g>
<path class="dash" d="M1102.500 318.500H1163.500V366.500H1102.500zM1180.500 318.500H1241.500V366.500H1180.500zM1290 318.500H1258.500V366.500H1290M1102.500 417.500H1163.500V465.500H1102.500zM1180.500 417.500H1241.500V465.500H1180.500zM1290 417.500H1258.500V465.500H1290"/>
<path class="cross" d="M49 300.500H1280M474.500 85V668"/>
<path fill="#fff" stroke="#777" d="M475.500 301.500v9l2-2 2 4 1-1-1-4h3z"/>
</svg>
<div class="hscroll"><button aria-label="Scroll left"><svg viewBox="0 0 6 8"><path class="k" d="M4.500 1L2 4l2.500 3"/></svg></button><i class="gap"></i><i class="thumb"></i><i class="rest"></i><button aria-label="Scroll right"><svg viewBox="0 0 6 8"><path class="k" d="M2 1l2.500 3L2 7"/></svg></button></div>
</section>
</main>
<footer class="status"><span></span><span>Select Objects [Space]</span><span>Floor: 1</span><span>CAD Layer: CAD,&nbsp; Default</span></footer>

<div class="taskbar">
<button class="start" aria-label="Start"><svg viewBox="0 0 12 12"><path fill="#fff" d="M0 2l5-1v4.500H0zM6 1l6-1v5.500H6zM0 6.500h5V11l-5-1zM6 6.500h6V12l-6-1z"/></svg></button>
<label class="search"><svg viewBox="0 0 14 14"><circle cx="7" cy="7" r="5.500" fill="none" stroke="#e9f7fc" stroke-width="2"/></svg><input type="text" placeholder="Ask me anything" aria-label="Ask me anything"><svg class="mic" viewBox="0 0 14 14"><path fill="none" stroke="#b9c6d3" d="M5.500 2.500h3v6h-3zM4 8v2.500h6V8M7 11v2"/></svg></label>
<div class="apps">
<button aria-label="Task view"><svg viewBox="0 0 16 16"><path fill="none" stroke="#e4ebf2" d="M4.500 3.500h7v9h-7zM3 4.500H1.500v7H3M13 4.500h1.500v7H13"/></svg></button>
<button aria-label="Edge"><svg viewBox="0 0 16 16"><path fill="none" stroke="#2492ea" stroke-width="3" d="M3 9h11C14 1 5 1 3 8c-1 7 6 8 10 5"/></svg></button>
<button aria-label="File Explorer"><svg viewBox="0 0 16 16"><path fill="#f4d66a" d="M1 3h5l1 1h8v10H1z"/><path fill="#fbf0a5" d="M2 6h12v4H2z"/><path fill="#43b6dd" d="M3 9h10v5h-3v-2H6v2H3z"/></svg></button>
<button aria-label="Store"><svg viewBox="0 0 16 16"><path fill="#fff" d="M1 5l14-1v11L1 14z"/><path fill="none" stroke="#fff" d="M5 5V1.500h6V5"/><path stroke="#0d2749" d="M4 9.500h8M8 6v7"/></svg></button>
<button class="active run" aria-label="Chief Architect"><svg viewBox="0 0 16 16"><path fill="#8ecb39" d="M0 0h16v16H0z"/><path fill="none" stroke="#1d6337" stroke-width="1.500" d="M2 14V3h8M3 3c6 1 10 5 11 11H4M5 6v6"/><path fill="#dff5b0" d="M11 11h4v4h-4z"/></svg></button>
<button class="run" aria-label="Chrome"><svg viewBox="0 0 16 16"><circle cx="8" cy="8" r="7" fill="#e34b3c"/><path fill="#f5cf3c" d="M8 8l7-3c1 5-2 10-7 10z"/><path fill="#46a755" d="M8 8v7C2 15-1 9 2 4z"/><circle cx="8" cy="8" r="3" fill="#458be8" stroke="#fff"/></svg></button>
<button aria-label="Camera"><svg viewBox="0 0 16 16"><path fill="#255b78" stroke="#8db9cd" d="M.5 3.500h4l1-2h5l1 2h4v8h-6l-2 3v-3h-7z"/><circle cx="8" cy="7" r="3" fill="none" stroke="#c4e4ed"/></svg></button>
<button class="run" aria-label="Camtasia"><svg viewBox="0 0 16 16"><path fill="#7db63b" d="M0 0h16v14h-2v2H0z"/><path fill="none" stroke="#f3fff0" stroke-width="3" d="M12 4H5v8h7"/></svg></button>
<button aria-label="SketchUp"><svg viewBox="0 0 16 16"><path fill="#d5203a" d="M1 4l7-3 7 3v6l-6 5-7-4z"/><path fill="none" stroke="#fff" stroke-width="1.500" d="M4 6c4-3 7 0 8 2M5 9c3-2 5 0 5 2"/></svg></button>
<button aria-label="Media player"><svg viewBox="0 0 16 16"><path fill="#8fb7df" d="M1 2h13v12H1z"/><path fill="#f3f5f7" d="M3 4h9v9H3z"/><path fill="#e4651c" d="M5 4l7 4.500L5 13z"/></svg></button>
<button aria-label="Firefox"><svg viewBox="0 0 16 16"><circle cx="8" cy="8" r="7" fill="#e67e1e"/><circle cx="9" cy="6" r="4.500" fill="#3569a4"/><path fill="#f7c144" d="M1 7c3 2 6 5 13 3-4 8-12 5-13-3z"/></svg></button>
<button aria-label="Notes"><svg viewBox="0 0 16 16"><path fill="#61c256" d="M8 1h6v13H5z"/><path fill="#e1f5e3" d="M2 4l8-2 2 8-8 3z"/><path stroke="#75b681" d="M4 6l6-1M4 9l6-1"/></svg></button>
<button aria-label="Publisher"><svg viewBox="0 0 16 16"><path fill="#d7eee8" stroke="#127568" d="M8.500 3.500h7v10h-7z"/><path fill="#107965" d="M0 2l9-1v14l-9-1z"/><path fill="none" stroke="#fff" stroke-width="1.500" d="M3 12V5h3v4H3"/><path stroke="#127568" d="M10 7h4M10 10h4"/></svg></button>
<button aria-label="Word"><svg viewBox="0 0 16 16"><path fill="#eaf0fb" stroke="#315da2" d="M8.500 2.500h6v11h-6z"/><path fill="#2759a6" d="M0 2l9-1v14l-9-1z"/><path fill="none" stroke="#fff" d="M2 5l1 6 2-5 1 5 2-6"/><path stroke="#315da2" d="M10 6h4M10 9h4M10 11h4"/></svg></button>
<button class="run" aria-label="Camtasia recorder"><svg viewBox="0 0 16 16"><path fill="#fff" d="M0 0h16v14h-2v2H0z"/><path fill="none" stroke="#182d28" stroke-width="3" d="M12 4H6v8h6"/></svg></button>
</div>
</div>
</body>
</html>
```
FILE: styles.css
```css
* { box-sizing: border-box; }
body {
  margin: 0;
  height: 100vh;
  display: flex;
  flex-direction: column;
  overflow: hidden;
  background: #f0f0f0;
  color: #111;
  font: 8px/12px Roboto, "Open Sans", sans-serif;
}
button { border: 0; padding: 0; background: none; font: inherit; color: inherit; }
svg { display: block; }
.k { fill: none; stroke: #222; }
.k[fill="#fff"] { fill: #fff; }
.n { fill: none; stroke: #26627f; }
.n[fill] { fill: #e3f0f4; }
.ic { font: bold 8px Roboto, sans-serif; fill: #222; }
.ic.r { fill: #c4202e; }
.ic.s { font-size: 5px; }

.titlebar { display: flex; align-items: center; gap: 3px; height: 15px; padding-left: 1px; background: #fff; }
.logo { width: 11px; height: 11px; }
.menu { display: flex; gap: 11px; height: 14px; padding: 2px 0 0 5px; background: #fff; font-family: Lato, sans-serif; }
.toolbar { display: flex; align-items: center; height: 20px; padding-left: 6px; background: #f0f0f0; }
.toolbar.second { border-top: 1px solid #e2e2e2; border-bottom: 1px solid #c4c4c4; }
.t { display: flex; align-items: center; width: 18px; height: 18px; flex: none; }
.t svg { width: 18px; height: 18px; }
.t.d { width: 26px; }
.t.d::after, .combo::after {
  content: "";
  border: 3px solid transparent;
  border-top-color: #222;
  border-bottom: 0;
}
.t.d::after { margin-left: 1px; }
.t.on { background: #c5dff2; }
.t.f { opacity: .3; }
.t.floor { justify-content: center; font-size: 9px; }
.sep { width: 8px; height: 19px; flex: none; border-left: 1px solid #b5b5b5; margin-left: 1px; margin-right: -1px; position: relative; }
.sep::after { content: ""; position: absolute; left: 3px; top: 3px; height: 13px; border-left: 1px dotted #999; }
.combo { display: flex; align-items: center; height: 14px; background: #e1e1e1; border: 1px solid #c6c6c6; padding-right: 2px; margin-left: 1px; }
.combo select { appearance: none; border: 0; background: none; font: 8px/12px Lato, sans-serif; color: inherit; flex: 1; min-width: 0; padding: 0 0 0 1px; }
.combo.set { width: 86px; }
.combo.ann { width: 90px; }
.combo.off { width: 45px; background: #c9c9c9; }
.combo.off::after { border-top-color: #999; }

.work { flex: 1; min-height: 0; display: flex; padding-top: 1px; }
.strip { width: 21px; background: #edf0f2; border-top: 3px solid #f0f0f0; border-right: 1px solid #bbb; border-bottom: 1px solid #bbb; }
.dock { width: 25px; display: flex; flex-direction: column; }
.dockhead { display: flex; justify-content: space-around; align-items: center; height: 14px; padding: 0 2px; background: #dcdcdc; }
.dockhead svg { width: 7px; height: 7px; }
.dockbody { flex: 1; border: 1px solid #8c8c8c; background: #f0f0f0; }
.gear { height: 15px; display: flex; align-items: center; justify-content: center; padding-right: 4px; }
.gear svg { width: 12px; height: 12px; }
.doc { flex: 1; min-width: 0; display: flex; flex-direction: column; margin-left: 2px; border-left: 1px solid #666; border-bottom: 1px solid #666; }
.doctitle { margin: 0; height: 15px; padding: 1px 2px 0; font: inherit; line-height: 14px; background: #d8d8d8; border-bottom: 1px solid #777; }
.plan { flex: 1; min-height: 0; width: 100%; }
.fine { stroke: #f4f1f9; fill: none; }
.major { stroke: #ece8f4; fill: none; }
.plan g { fill: none; }
.w { stroke: #0b0b0e; }
.g { stroke: #a3a1a6; stroke-width: 2; }
.m { stroke: #43133f; }
.fold { stroke: #5d3a5d; }
.p { stroke: #c39abf; stroke-width: 2; }
.thick { stroke-width: 2; }
.dash { fill: none; stroke: #692069; stroke-dasharray: 3 1; }
.cross { stroke: #1d1d8f; fill: none; }
.hscroll { display: flex; align-items: center; height: 10px; background: #f0f0f0; padding: 0 1px 0 3px; }
.hscroll svg { width: 6px; height: 8px; }
.gap { flex: 513; }
.thumb { flex: 110; height: 10px; background: #c9c9c9; }
.rest { flex: 593; }

.status { display: grid; grid-template-columns: 676fr 240fr 105fr 259fr; height: 14px; }
.status span { padding-top: 2px; }
.status span + span { border-left: 1px solid #ddd; padding-left: 2px; }

.taskbar { display: flex; height: 27px; background: linear-gradient(90deg, #10294a, #0b2548 60%, #06203d); }
.start { width: 32px; display: flex; justify-content: center; align-items: center; background: #15304c; }
.start svg { width: 11px; height: 11px; }
.search { display: flex; align-items: center; width: 229px; padding: 0 7px 0 6px; background: #394f6d; }
.search svg { width: 14px; height: 14px; }
.search input { flex: 1; min-width: 0; border: 0; outline: 0; padding: 0 7px; background: none; color: #c0cad5; font: 10px Roboto, sans-serif; }
.search input::placeholder { color: #b6c1cd; }
.apps { display: grid; grid-template-columns: repeat(15, 1fr); width: 491px; }
.apps button { display: flex; justify-content: center; align-items: center; border-bottom: 1px solid transparent; }
.apps svg { width: 15px; height: 15px; }
.apps .run { border-bottom-color: #8fbbe0; }
.apps .active { background: #1c568a; }
```
